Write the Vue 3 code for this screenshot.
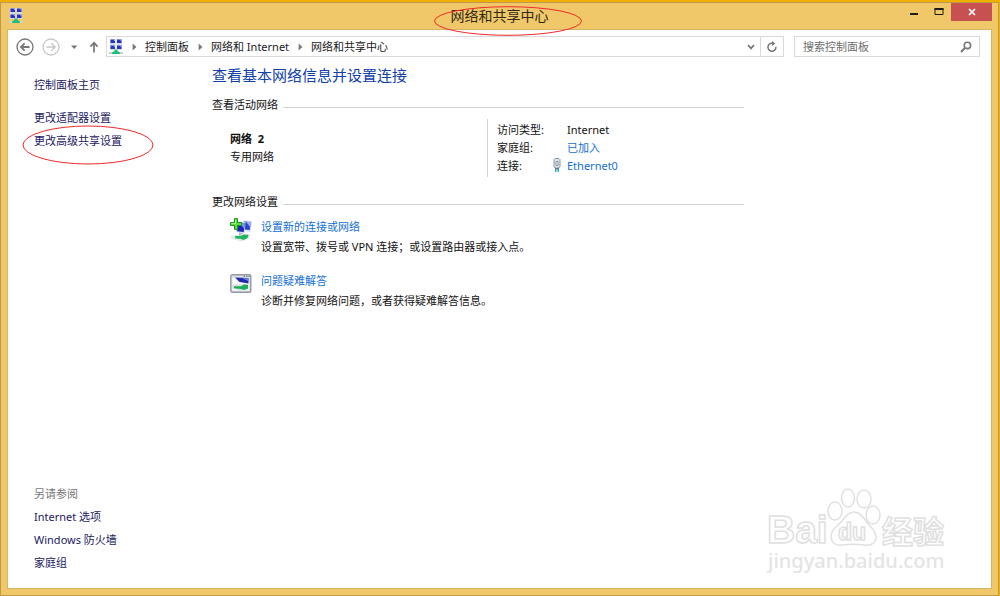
<script setup>
import { ref } from 'vue'

const query = ref('')
const crumbs = ['控制面板', '网络和 Internet', '网络和共享中心']
const tasks = ['更改适配器设置', '更改高级共享设置']
const related = ['Internet 选项', 'Windows 防火墙', '家庭组']
const settings = [
  { id: 'connect', title: '设置新的连接或网络', text: '设置宽带、拨号或 VPN 连接；或设置路由器或接入点。' },
  { id: 'repair', title: '问题疑难解答', text: '诊断并修复网络问题，或者获得疑难解答信息。' },
]
</script>

<template>
  <div class="desktop">
    <div class="window">
      <header class="titlebar">
        <svg class="app-icon" viewBox="0 0 16 16" aria-hidden="true">
          <path d="M2 0h5.500v6H2zM8.500 0H14v6H8.500zM2 6h5.500v5H2zM8.500 6H14v5H8.500z" fill="#d3dbe8" />
          <path d="M2.500.5h4.500v3.500H2.500zM9 .5h4.500V4H9zM2.500 6.500H7V10H2.500zM9 6.500h4.500V10H9z" fill="#2632c0" />
          <path d="M4.800.5H7v1.700zM11.300.5h2.200v1.700zM4.800 6.500H7v1.700zM11.300 6.500h2.200v1.700z" fill="#a9b6ee" />
          <path d="M1 13h14v2H1z" fill="#d3d6d8" />
          <path d="M6.500 10.500h3v1.500l2.500 1.500V15H4v-1.500L6.500 12z" fill="#1fc07a" />
        </svg>
        <h1 class="title">
          网络和共享中心
          <svg class="ring title-ring" viewBox="0 0 148 30" aria-hidden="true">
            <ellipse cx="74" cy="15" rx="73.5" ry="14.3" />
          </svg>
        </h1>
        <div class="window-buttons">
          <button type="button" class="win-btn" aria-label="最小化">
            <svg width="10" height="10" viewBox="0 0 10 10"><path d="M1 6h8v2H1z" fill="#1c1c1c" /></svg>
          </button>
          <button type="button" class="win-btn" aria-label="最大化">
            <svg width="10" height="10" viewBox="0 0 10 10"><path d="M.5 1h9v2h-9z" fill="#1c1c1c" /><path d="M1 1.5h8v6H1z" fill="none" stroke="#1c1c1c" /></svg>
          </button>
          <button type="button" class="win-btn close" aria-label="关闭">
            <svg width="10" height="10" viewBox="0 0 10 10"><path d="M2 2l6 6M8 2l-6 6" stroke="#fff" stroke-width="1.7" /></svg>
          </button>
        </div>
      </header>

      <div class="client">
        <div class="toolbar">
          <button type="button" class="nav-btn back" aria-label="后退">
            <svg viewBox="0 0 18 18"><circle cx="9" cy="9" r="8" /><path d="M13.5 9H5.2M8.6 5.3L4.900 9l3.7 3.7" stroke-width="1.8" /></svg>
          </button>
          <button type="button" class="nav-btn forward" aria-label="前进">
            <svg viewBox="0 0 18 18"><circle cx="9" cy="9" r="8" /><path d="M4.5 9h8.3M9.4 5.3L13.1 9l-3.7 3.7" stroke-width="1.4" /></svg>
          </button>
          <button type="button" class="tool-btn" aria-label="最近浏览的位置">
            <svg width="8" height="8" viewBox="0 0 8 8"><path d="M1 2.5h6.4L4.2 6z" fill="#777" /></svg>
          </button>
          <button type="button" class="tool-btn up" aria-label="上移">
            <svg width="10" height="12" viewBox="0 0 10 12"><path d="M5 11.5V2M1.4 5.6L5 1.8l3.6 3.8" fill="none" stroke="#777" stroke-width="1.7" /></svg>
          </button>
          <nav class="address" aria-label="地址">
            <svg class="address-icon" viewBox="0 0 16 16" aria-hidden="true">
              <path d="M2 0h5.500v6H2zM8.500 0H14v6H8.500zM2 6h5.500v5H2zM8.500 6H14v5H8.500z" fill="#d3dbe8" />
              <path d="M2.500.5h4.500v3.500H2.500zM9 .5h4.500V4H9zM2.500 6.500H7V10H2.500zM9 6.500h4.500V10H9z" fill="#2632c0" />
              <path d="M4.800.5H7v1.700zM11.300.5h2.200v1.700zM4.800 6.500H7v1.700zM11.300 6.500h2.200v1.700z" fill="#a9b6ee" />
              <path d="M1 13h14v2H1z" fill="#c9ced2" />
              <path d="M6.500 10.500h3v1.500l2.500 1.500V15H4v-1.500L6.500 12z" fill="#1fc07a" />
            </svg>
            <template v-for="crumb in crumbs" :key="crumb">
              <svg class="chevron" width="5" height="8" viewBox="0 0 5 8" aria-hidden="true"><path d="M.6.6L4.4 4 .6 7.4z" fill="#777" /></svg>
              <a href="#" class="crumb">{{ crumb }}</a>
            </template>
            <button type="button" class="address-btn drop" aria-label="以前的位置">
              <svg width="8" height="8" viewBox="0 0 8 8"><path d="M1 2l3 3.4L7 2" fill="none" stroke="#777" stroke-width="1.8" /></svg>
            </button>
            <button type="button" class="address-btn reload" aria-label="刷新">
              <svg width="12" height="12" viewBox="0 0 12 12"><path d="M9.900 5.800a4 4 0 1 1-4-3.600h1" fill="none" stroke="#777" stroke-width="1.5" /><path d="M6 0l3.4 2.4L6 5z" fill="#777" /></svg>
            </button>
          </nav>
          <label class="search">
            <input v-model="query" type="search" placeholder="搜索控制面板" aria-label="搜索控制面板" />
            <svg width="12" height="12" viewBox="0 0 12 12" aria-hidden="true"><circle cx="7.400" cy="4.400" r="3.200" fill="none" stroke="#777" stroke-width="1.600" /><path d="M5.200 6.800L1 11" stroke="#777" stroke-width="2" /></svg>
          </label>
        </div>

        <div class="body">
          <aside class="sidebar">
            <a href="#" class="side-link home">控制面板主页</a>
            <div v-for="(task, i) in tasks" :key="task" class="task">
              <a href="#" class="side-link">{{ task }}</a>
              <svg v-if="i === 1" class="ring task-ring" viewBox="0 0 132 40" aria-hidden="true">
                <ellipse cx="66" cy="20" rx="65" ry="19" />
              </svg>
            </div>
            <div class="related">
              <span class="related-title">另请参阅</span>
              <a v-for="item in related" :key="item" href="#" class="side-link">{{ item }}</a>
            </div>
          </aside>

          <main class="main">
            <h2 class="heading">查看基本网络信息并设置连接</h2>
            <h3 class="section">查看活动网络</h3>
            <div class="network">
              <div class="network-name">
                <strong>网络&nbsp; 2</strong>
                <span>专用网络</span>
              </div>
              <dl class="details">
                <dt>访问类型:</dt>
                <dd>Internet</dd>
                <dt>家庭组:</dt>
                <dd><a href="#">已加入</a></dd>
                <dt>连接:</dt>
                <dd>
                  <svg class="plug" width="8" height="14" viewBox="0 0 8 14" aria-hidden="true">
                    <path d="M1 1.5L2 .5h4l1 1v7L6 10H2L1 8.500z" fill="#dbe3ea" stroke="#8b98a6" />
                    <path d="M3 3.500h2v4H3z" fill="#f9fbfc" stroke="#76838f" stroke-width=".8" />
                    <path d="M2 10h4v1.500H2z" fill="#567c91" /><path d="M2 11h1.500v3H2zM4.500 11H6v3H4.500z" fill="#39a9cb" />
                  </svg>
                  <a href="#">Ethernet0</a>
                </dd>
              </dl>
            </div>

            <h3 class="section">更改网络设置</h3>
            <ul class="settings">
              <li v-for="item in settings" :key="item.id">
                <svg v-if="item.id === 'connect'" class="item-icon" viewBox="0 0 22 24" aria-hidden="true">
                  <path d="M13 2.500l9 .5-1.500 11-7-1z" fill="#d5deef" /><path d="M14 3.500l7 .5-1.300 8-5.700-.5z" fill="#2a45c8" />
                  <path d="M16 3.700l5 .3-.8 5z" fill="#9db4f2" />
                  <path d="M6 3.500l9.500.5-1 11-8-1z" fill="#c8d2ed" /><path d="M7 5l7.700.5-1 8.500-6.500-.8z" fill="#1c25b4" />
                  <path d="M9.500 5.200l5.200.3-.6 5z" fill="#7e92e8" />
                  <path d="M9 14.500l4 .5v2H9z" fill="#acb8ca" />
                  <path d="M1 17.500h8l4-2 7 .5v4l-8 3.500-6-1.500-5-1.500z" fill="#e4e7e9" />
                  <path d="M5 18l6-.2 3-1.300 4.500.5-1 3-4 2-3-1.200-5-.3z" fill="#1eb45c" />
                  <path d="M4.500.5h3v4h4v3h-4v4h-3v-4h-4v-3h4z" fill="#5fdb42" stroke="#1b9622" />
                  <path d="M5.500 1.500v4h-4" fill="none" stroke="#b3f39b" stroke-width=".8" />
                </svg>
                <svg v-else class="item-icon" viewBox="0 0 22 24" aria-hidden="true">
                  <rect x=".8" y="2.800" width="20" height="17.500" rx="1.500" fill="#dde2e6" stroke="#9299a1" stroke-width="1.400" />
                  <path d="M2.500 6h16.500v12.500H2.500z" fill="#fbfcfd" />
                  <path d="M13.500 4.300H15M16 4.300h1.500M18.500 4.300H20" stroke="#626b78" />
                  <path d="M5 5.500l13.500.5v5.500l-9-1.500z" fill="#2029ae" /><path d="M12 6l6.500.3v3z" fill="#7286df" />
                  <path d="M2.500 12.500l15.500-.5v5l-8 1.500-7.500-2z" fill="#d8dee2" />
                  <path d="M4 14.200h7l3-1.700 4 .5v3.500l-4 1.500-3-1-7-.8z" fill="#19ae58" />
                </svg>
                <div>
                  <a href="#">{{ item.title }}</a>
                  <p>{{ item.text }}</p>
                </div>
              </li>
            </ul>
          </main>
        </div>

        <svg class="watermark" viewBox="0 0 184 94" aria-hidden="true">
          <g class="outline">
            <text x="3" y="59" class="wm-latin">Bai</text>
            <ellipse cx="71" cy="27" rx="7" ry="9" />
            <ellipse cx="84" cy="14" rx="6.500" ry="9" />
            <ellipse cx="100" cy="15" rx="7" ry="9" />
            <ellipse cx="109" cy="31" rx="7" ry="9" />
            <path d="M90 28c-6 0-9 5-12 9-4 5-11 8-11 15 0 7 5 10 11 9 8-1 15-1 23 0 6 1 11-2 11-8 0-7-6-10-10-16-3-4-6-9-12-9z" />
            <text x="74" y="56" class="wm-du">du</text>
            <text x="118" y="59" class="wm-cjk">经验</text>
            <text x="4" y="84" class="wm-url">jingyan.baidu.com</text>
          </g>
        </svg>
      </div>
    </div>
  </div>
</template>

<style>
body {
  margin: 0;
}
</style>

<style scoped>
* {
  box-sizing: border-box;
}
.desktop {
  display: flex;
  min-height: 100vh;
  padding: 2px 1px 0 0;
  background: #f0b000;
  color: #111;
  font: 11px/18px "Noto Sans", "Noto Sans CJK SC", sans-serif;
}
.window {
  display: flex;
  flex: 1;
  flex-direction: column;
  padding: 0 6px 6px;
  border: 1px solid #c09a45;
  background: #f0c869;
}
h1,
h2,
h3,
p,
ul,
dl,
dd {
  margin: 0;
  padding: 0;
  font-weight: 400;
}
a {
  color: #1470d2;
  text-decoration: none;
}
button {
  display: flex;
  align-items: center;
  justify-content: center;
  padding: 0;
  border: 0;
  background: none;
}
.titlebar {
  display: grid;
  grid-template-columns: 1fr auto 1fr;
  height: 26px;
}
.app-icon {
  width: 16px;
  height: 16px;
  margin: 5px 0 0 1px;
}
.title {
  position: relative;
  color: #33291a;
  font-size: 14px;
  line-height: 26px;
}
.ring {
  position: absolute;
  fill: none;
  stroke: #f02a2a;
  stroke-width: 1;
  pointer-events: none;
}
.title-ring {
  z-index: 1;
  top: 3px;
  left: -17px;
  width: 148px;
  height: 30px;
}
.window-buttons {
  display: flex;
  justify-content: flex-end;
}
.win-btn {
  width: 25px;
  height: 18px;
}
.win-btn.close {
  width: 41px;
  background: #c75050;
}
.client {
  position: relative;
  display: flex;
  flex: 1;
  flex-direction: column;
  border: 1px solid #d5b466;
  background: #fff;
}
.toolbar {
  display: flex;
  align-items: center;
  padding: 6px 11px 0 8px;
}
.nav-btn {
  width: 18px;
  height: 18px;
  margin-right: 8px;
}
.nav-btn svg {
  width: 18px;
  height: 18px;
  fill: none;
  stroke: #777;
  stroke-width: 1.3;
}
.nav-btn.forward svg {
  stroke: #c8c8c8;
}
.tool-btn {
  width: 12px;
  height: 18px;
}
.tool-btn.up {
  margin: 0 6px 0 8px;
}
.address {
  display: flex;
  flex: 1;
  align-items: center;
  height: 21px;
  border: 1px solid #d9d9d9;
}
.address-icon {
  width: 16px;
  height: 16px;
  margin: 0 8px 0 1px;
}
.chevron {
  margin-right: 8px;
}
.crumb {
  margin-right: 9px;
  color: #1a1a1a;
}
.address-btn {
  width: 18px;
  height: 19px;
}
.drop {
  margin-left: auto;
}
.reload {
  width: 23px;
  border-left: 1px solid #d9d9d9;
}
.search {
  display: flex;
  align-items: center;
  width: 186px;
  height: 21px;
  margin-left: 10px;
  padding: 0 7px 0 8px;
  border: 1px solid #d9d9d9;
}
.search input {
  flex: 1;
  min-width: 0;
  padding: 0;
  border: 0;
  outline: 0;
  background: none;
  color: #333;
  font: inherit;
}
.search input::placeholder {
  color: #6d6d6d;
}
.body {
  display: flex;
  flex: 1;
}
.sidebar {
  display: flex;
  flex-direction: column;
  width: 204px;
  padding: 16px 0 14px 26px;
  line-height: 23px;
}
.side-link {
  color: #1b2161;
}
.home {
  margin-bottom: 10px;
}
.task {
  position: relative;
}
.task-ring {
  top: -4px;
  left: -12px;
  width: 132px;
  height: 40px;
}
.related {
  display: flex;
  flex-direction: column;
  align-items: flex-start;
  margin-top: auto;
}
.related-title {
  color: #777;
}
.main {
  flex: 1;
  max-width: 532px;
}
.heading {
  padding-top: 7px;
  color: #1040a8;
  font-size: 15px;
  line-height: 22px;
}
.section {
  display: flex;
  align-items: center;
  gap: 5px;
  margin-top: 10px;
  font-size: 11px;
  line-height: 18px;
}
.section::after {
  flex: 1;
  height: 1px;
  margin-top: 4px;
  background: #d3d3d3;
  content: "";
}
.network {
  display: flex;
  margin: 5px 0 16px 18px;
}
.network-name {
  display: flex;
  flex-direction: column;
  width: 257px;
  padding-top: 11px;
}
.details {
  display: grid;
  grid-template-columns: 70px auto;
  align-content: start;
  padding: 2px 0 2px 9px;
  border-left: 1px solid #d3d3d3;
}
.details dd {
  position: relative;
}
.plug {
  position: absolute;
  top: 1px;
  left: -14px;
}
.settings {
  margin: 6px 0 0 18px;
  list-style: none;
}
.settings li {
  display: flex;
  gap: 9px;
  margin-bottom: 14px;
  line-height: 20px;
}
.item-icon {
  width: 22px;
  height: 24px;
  margin-top: 1px;
}
.watermark {
  position: absolute;
  right: 43px;
  bottom: 10px;
  width: 184px;
  height: 94px;
}
.outline {
  fill: #fff;
  stroke: #e0e0e0;
  stroke-width: 1.5;
}
.wm-latin {
  font: 700 39px "Liberation Sans", sans-serif;
}
.wm-du {
  font: 700 23px "Liberation Sans", sans-serif;
}
.wm-cjk {
  font: 700 31px "Noto Sans CJK SC", sans-serif;
}
.wm-url {
  fill: #e4e4e4;
  stroke: none;
  font: 500 20px "Noto Sans", sans-serif;
}
</style>
